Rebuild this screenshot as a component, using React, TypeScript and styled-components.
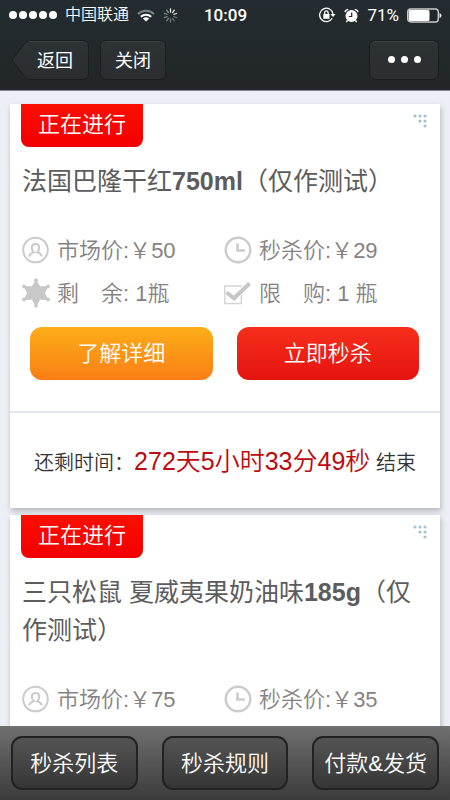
import React from "react";
import styled, { createGlobalStyle } from "styled-components";

const GlobalStyle = createGlobalStyle`
  * { box-sizing: border-box; }
  body {
    margin: 0;
    background: #eceff5;
    font-family: "Liberation Sans", "Noto Sans CJK SC", sans-serif;
    font-weight: 350;
  }
  button { font: inherit; margin: 0; cursor: pointer; }
`;

const Page = styled.div`
  display: flex;
  flex-direction: column;
  height: 100vh;
`;

const Header = styled.header`
  flex: none;
  background: linear-gradient(#232c30, #222628);
  border-bottom: 1px solid #85878c;
  color: #fff;
`;

const StatusBar = styled.div`
  display: grid;
  grid-template-columns: 1fr auto 1fr;
  align-items: center;
  height: 30px;
  padding: 0 8px 0 9px;
  font-size: 16px;
  line-height: 30px;
`;

const StatusGroup = styled.div<{ $end?: boolean }>`
  display: flex;
  align-items: center;
  justify-content: ${(p) => (p.$end ? "flex-end" : "flex-start")};
  gap: 8px;
  white-space: nowrap;
`;

const Signal = styled.span`
  display: flex;
  gap: 2px;
`;

const SignalDot = styled.i`
  width: 8px;
  height: 8px;
  border-radius: 50%;
  background: #fff;
`;

const Clock = styled.time`
  font-family: Roboto, "Liberation Sans", sans-serif;
  font-weight: 500;
  font-size: 17px;
`;

const Percent = styled.span`
  font-family: Roboto, "Liberation Sans", sans-serif;
  font-weight: 400;
  font-size: 17px;
`;

const NavBar = styled.nav`
  display: flex;
  align-items: center;
  gap: 11px;
  height: 60px;
  padding: 0 11px 0 12px;
`;

const NavButton = styled.button<{ $push?: boolean }>`
  display: flex;
  align-items: center;
  justify-content: center;
  gap: 4px;
  height: 40px;
  min-width: ${(p) => (p.$push ? "70px" : "66px")};
  margin-left: ${(p) => (p.$push ? "auto" : "0")};
  padding: 0 0 2px;
  border: 1px solid #1a1e20;
  border-radius: 6px;
  background: linear-gradient(#2c3235, #2b2e31);
  box-shadow: inset 0 1px 0 #3a4043;
  color: #fff;
  font-size: 18px;
  font-weight: 400;
`;

const BackButton = styled.button`
  position: relative;
  width: 77px;
  height: 40px;
  padding: 0 0 2px 25px;
  border: 0;
  background: none;
  color: #fff;
  font-size: 18px;
  font-weight: 400;
  text-align: left;

  svg {
    position: absolute;
    inset: 0;
  }
  span {
    position: relative;
  }
`;

const MoreDot = styled.i`
  width: 7px;
  height: 7px;
  margin: 0 1px;
  border-radius: 50%;
  background: #fff;
`;

const Main = styled.main`
  flex: 1;
  min-height: 0;
  display: flex;
  flex-direction: column;
  gap: 7px;
  padding: 13px 10px;
  overflow-y: auto;
  scrollbar-width: none;
`;

const Card = styled.article`
  flex: none;
  background: #fff;
  box-shadow: 1px 3px 6px rgba(0, 0, 0, 0.24);
`;

const CardTop = styled.div`
  display: flex;
  align-items: flex-start;
  justify-content: space-between;
  padding: 0 12px 0 11px;
`;

const Ribbon = styled.span`
  height: 43px;
  padding: 0 17px;
  border-radius: 0 0 8px 8px;
  background: linear-gradient(#fa0f00, #f20000);
  color: #fff;
  font-size: 22px;
  line-height: 42px;
`;

const CornerMark = styled.svg`
  margin-top: 9px;
`;

const Title = styled.h2`
  margin: 0;
  padding: 15px 12px 0;
  color: #5c5c5c;
  font-size: 25px;
  font-weight: 400;
  line-height: 38px;

  b { font-weight: 700; }
`;

const Facts = styled.ul`
  display: grid;
  grid-template-columns: 202px 1fr;
  margin: 0;
  padding: 28px 12px 0;
  list-style: none;
`;

const Fact = styled.li`
  display: flex;
  align-items: center;
  gap: 7px;
  height: 43px;
  color: #868282;
  font-size: 22px;
  white-space: pre;

  span { padding-bottom: 4px; }
`;

const Actions = styled.div`
  display: grid;
  grid-template-columns: 1fr 1fr;
  gap: 24px;
  padding: 13px 21px 31px 20px;
`;

const ActionButton = styled.button<{ $tone: "info" | "buy" }>`
  height: 53px;
  padding: 0 0 5px;
  border: 0;
  border-radius: 12px;
  background: ${(p) =>
    p.$tone === "info"
      ? "linear-gradient(#fdae18, #f97e15)"
      : "linear-gradient(#f62e1b, #e41410)"};
  color: #fff;
  font-size: 22px;
`;

const Countdown = styled.p`
  margin: 0;
  padding-top: 5px;
  border-top: 2px solid #e3e8ec;
  color: #333;
  font-size: 20px;
  line-height: 90px;
  text-align: center;
  white-space: nowrap;

  strong {
    color: #bd0a0e;
    font-size: 25px;
    font-weight: 350;
    line-height: 1;
  }
`;

const Footer = styled.footer`
  flex: none;
  display: grid;
  grid-template-columns: repeat(3, 1fr);
  gap: 24px;
  padding: 10px 11px;
  background: linear-gradient(#707070, #3b3b3b);
`;

const TabButton = styled.button`
  height: 54px;
  padding: 0 0 4px;
  border: 2px solid #222;
  border-radius: 11px;
  background: linear-gradient(#545454, #363636);
  color: #fff;
  font-size: 22px;
  white-space: nowrap;
`;

const WifiIcon = () => (
  <svg width="18" height="13" viewBox="0 0 18 13" fill="none" strokeWidth="2">
    <path d="M1 5C5.500 .5 12.500 .5 17 5" stroke="#7d8487" />
    <path d="M3.800 7.800C6.800 5 11.200 5 14.200 7.800" stroke="#fff" />
    <path d="M9 12.500L5.800 9.500Q9 7 12.200 9.500Z" fill="#fff" />
  </svg>
);

const SpinnerIcon = () => (
  <svg width="15" height="15" viewBox="0 0 15 15" stroke="#fff" strokeWidth="1.3" strokeLinecap="round">
    {[0.95, 0.9, 0.75, 0.3, 0.3, 0.35, 0.4, 0.4, 0.4, 0.5].map((o, i) => (
      <path key={i} d="M7.500 1V4" opacity={o} transform={`rotate(${i * 36} 7.500 7.500)`} />
    ))}
  </svg>
);

const RotationLockIcon = () => (
  <svg width="17" height="16" viewBox="0 0 17 16" fill="none" stroke="#fff" strokeWidth="1.300">
    <path d="M13.200 11.200A6.700 6.700 0 1 1 14 7" />
    <path d="M11.400 7H16.600L14 10Z" fill="#fff" stroke="none" />
    <rect x="4.300" y="7" width="6.200" height="4.800" fill="#fff" stroke="none" />
    <path d="M5.700 7V5.600a1.700 1.700 0 0 1 3.400 0V7" />
  </svg>
);

const AlarmIcon = () => (
  <svg width="15" height="15" viewBox="0 0 15 15">
    <circle cx="7.500" cy="8" r="6" fill="#fff" />
    <path d="M1 4.200Q1.500 1.700 4.200 1.300M14 4.200Q13.500 1.700 10.800 1.300" stroke="#fff" strokeWidth="1.300" fill="none" />
    <path d="M3.500 12.500L2.300 14M11.500 12.500L12.700 14" stroke="#fff" strokeWidth="1.400" />
    <path d="M7.700 4.500V8.500H4.800" stroke="#22292c" strokeWidth="1.200" fill="none" />
  </svg>
);

const BatteryIcon = () => (
  <svg width="35" height="15" viewBox="0 0 35 15">
    <rect x="0.700" y="1" width="30.600" height="13" rx="3" fill="#20272a" stroke="#c9cccd" strokeWidth="1.400" />
    <rect x="1.700" y="2" width="20.800" height="11" rx="1.500" fill="#fff" />
    <path d="M32.500 5V10Q34.500 9.500 34.500 7.500T32.500 5Z" fill="#e4e6e6" />
  </svg>
);

const CornerDots = () => (
  <CornerMark width="15" height="15" viewBox="0 0 15 15" fill="#a3c3ce" aria-hidden="true">
    {[[2, 3], [7, 3], [12, 3], [7, 8], [12, 8], [12, 13]].map(([x, y]) => (
      <circle key={`${x}-${y}`} cx={x} cy={y} r="1.600" />
    ))}
  </CornerMark>
);

const PersonIcon = () => (
  <svg width="28" height="28" viewBox="0 0 28 28" fill="none" stroke="#cbcbcb" strokeWidth="2">
    <circle cx="13.500" cy="14" r="12.300" />
    <path d="M7.200 20.500C7.500 17.500 9.500 17.200 11.800 16.300C9.300 14.200 8.400 8 13.500 8S17.700 14.200 15.200 16.300C17.500 17.200 19.500 17.500 19.800 20.500" />
  </svg>
);

const ClockIcon = () => (
  <svg width="28" height="28" viewBox="0 0 28 28" fill="none" stroke="#cbcbcb">
    <circle cx="14" cy="14" r="12.300" strokeWidth="2.400" />
    <path d="M13.500 7.500V14.500H21" strokeWidth="2.600" />
  </svg>
);

const StarIcon = () => (
  <svg width="28" height="30" viewBox="0 0 28 30" fill="#c8c8c8">
    <path d="M14 1L18 8.200L26.500 8L23 15L26.500 22L18 21.800L14 29L10 21.800L1.500 22L5 15L1.500 8L10 8.200Z" />
    {[[14, 2.200], [26, 8.500], [26, 21.500], [14, 27.800], [2, 21.500], [2, 8.500]].map(([x, y]) => (
      <circle key={`${x}-${y}`} cx={x} cy={y} r="1.900" />
    ))}
  </svg>
);

const CheckIcon = () => (
  <svg width="28" height="24" viewBox="0 0 28 24" fill="none">
    <rect x="0.800" y="5" width="16.500" height="17.500" stroke="#d5d5d5" strokeWidth="1.500" />
    <path d="M3 12L9.500 17L25 3" stroke="#fff" strokeWidth="6" />
    <path d="M2.500 11.500L10 17.300L25.500 2.500" stroke="#c6c6c6" strokeWidth="4" />
  </svg>
);

type Product = {
  title: React.ReactNode;
  market: string;
  price: string;
  left: string;
  limit: string;
  remaining: string;
};

const products: Product[] = [
  {
    title: <>法国巴隆干红<b>750ml</b>（仅作测试）</>,
    market: "50",
    price: "29",
    left: "1瓶",
    limit: "1 瓶",
    remaining: "272天5小时33分49秒",
  },
  {
    title: <>三只松鼠 夏威夷果奶油味<b>185g</b>（仅作测试）</>,
    market: "75",
    price: "35",
    left: "1瓶",
    limit: "1 瓶",
    remaining: "272天5小时33分49秒",
  },
];

const ProductCard = ({ item }: { item: Product }) => (
  <Card>
    <CardTop>
      <Ribbon>正在进行</Ribbon>
      <CornerDots />
    </CardTop>
    <Title>{item.title}</Title>
    <Facts>
      <Fact><PersonIcon /><span>市场价:￥{item.market}</span></Fact>
      <Fact><ClockIcon /><span>秒杀价:￥{item.price}</span></Fact>
      <Fact><StarIcon /><span>剩　余: {item.left}</span></Fact>
      <Fact><CheckIcon /><span>限　购: {item.limit}</span></Fact>
    </Facts>
    <Actions>
      <ActionButton type="button" $tone="info">了解详细</ActionButton>
      <ActionButton type="button" $tone="buy">立即秒杀</ActionButton>
    </Actions>
    <Countdown>
      还剩时间：<strong>{item.remaining}</strong> 结束
    </Countdown>
  </Card>
);

export default function App() {
  return (
    <Page>
      <GlobalStyle />
      <Header>
        <StatusBar>
          <StatusGroup>
            <Signal>
              {[0, 1, 2, 3, 4].map((n) => <SignalDot key={n} />)}
            </Signal>
            <span>中国联通</span>
            <WifiIcon />
            <SpinnerIcon />
          </StatusGroup>
          <Clock>10:09</Clock>
          <StatusGroup $end>
            <RotationLockIcon />
            <AlarmIcon />
            <Percent>71%</Percent>
            <BatteryIcon />
          </StatusGroup>
        </StatusBar>
        <NavBar>
          <BackButton type="button">
            <svg width="77" height="40" viewBox="0 0 77 40" aria-hidden="true">
              <defs>
                <linearGradient id="back" x1="0" y1="0" x2="0" y2="1">
                  <stop offset="0" stopColor="#2c3235" />
                  <stop offset="1" stopColor="#2b2e31" />
                </linearGradient>
              </defs>
              <path
                d="M19 .5H70Q76.500 .5 76.500 6V34Q76.500 39.500 70 39.500H19Q15 39.500 12.500 36L1 21.500Q0 20 1 18.500L12.500 4Q15 .5 19 .5Z"
                fill="url(#back)"
                stroke="#1a1e20"
              />
              <path d="M17 1.500H71" stroke="#3a4043" />
            </svg>
            <span>返回</span>
          </BackButton>
          <NavButton type="button">关闭</NavButton>
          <NavButton type="button" $push aria-label="更多">
            <MoreDot /><MoreDot /><MoreDot />
          </NavButton>
        </NavBar>
      </Header>
      <Main>
        {products.map((item, i) => <ProductCard key={i} item={item} />)}
      </Main>
      <Footer>
        <TabButton type="button">秒杀列表</TabButton>
        <TabButton type="button">秒杀规则</TabButton>
        <TabButton type="button">付款&amp;发货</TabButton>
      </Footer>
    </Page>
  );
}
